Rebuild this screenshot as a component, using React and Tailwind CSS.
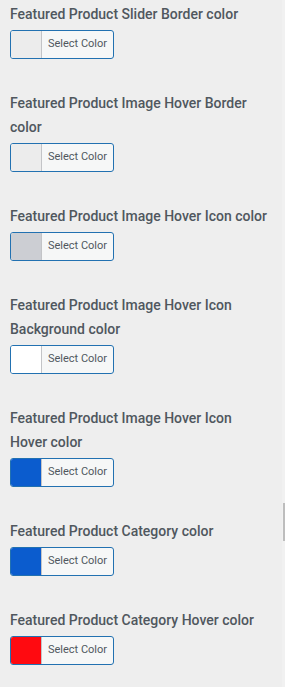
import React from "react";

const fields = [
  { label: "Featured Product Slider Border color", color: "#ececec" },
  { label: "Featured Product Image Hover Border color", color: "#ececec" },
  { label: "Featured Product Image Hover Icon color", color: "#ccced3" },
  { label: "Featured Product Image Hover Icon Background color", color: "#ffffff" },
  { label: "Featured Product Image Hover Icon Hover color", color: "#0b5cce" },
  { label: "Featured Product Category color", color: "#0b5cce" },
  { label: "Featured Product Category Hover color", color: "#ff0a10" },
];

const ColorButton = ({ color }) => (
  <button
    type="button"
    className="flex h-[29px] w-[104px] overflow-hidden rounded-[3px] border border-[#2271b1] bg-[#f6f7f7] p-0"
  >
    <span
      className="block h-full w-[31px] border-r border-[#c3c4c7]"
      style={{ backgroundColor: color }}
    />
    <span className="flex h-full flex-1 items-center justify-center text-[11px] text-[#50575e]">
      Select Color
    </span>
  </button>
);

export default function App() {
  return (
    <div className="relative min-h-[687px] w-[285px] bg-[#eeeeee] font-['Roboto',sans-serif]">
      {/* scrollbar strip */}
      <div className="absolute right-0 top-0 h-full w-[3px] bg-[#f1f1f1]">
        <div className="absolute right-0 top-[503px] h-[38px] w-[2px] bg-[#bdbdbd]" />
      </div>
      <div className="flex flex-col gap-[32px] pl-[10px] pr-[17px] pt-[2px]">
        {fields.map((f) => (
          <div key={f.label} className="flex flex-col gap-[4px]">
            <label className="text-[14px] font-medium leading-[24px] text-[#50575e]">
              {f.label}
            </label>
            <ColorButton color={f.color} />
          </div>
        ))}
      </div>
    </div>
  );
}
